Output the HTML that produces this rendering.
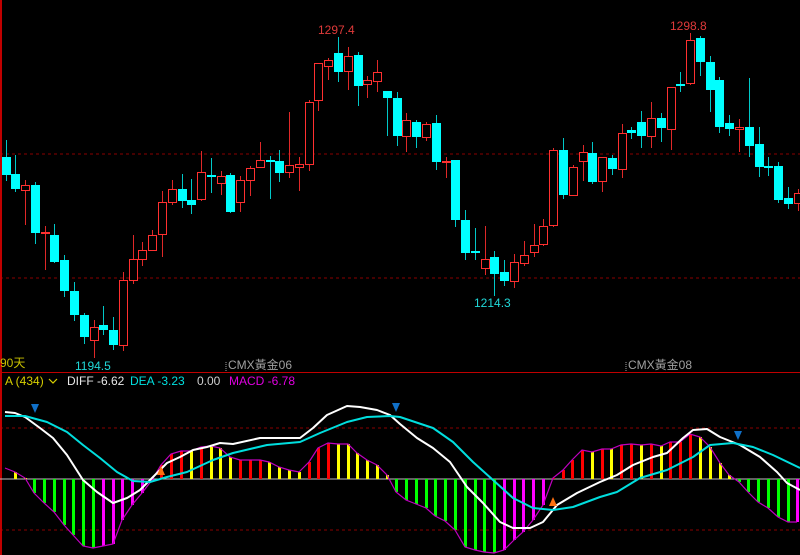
<!DOCTYPE html>
<html><head><meta charset="utf-8"><style>
html,body{margin:0;padding:0;background:#000;width:800px;height:555px;overflow:hidden}
svg{display:block}
text{font-family:"Liberation Sans","Noto Sans CJK TC",sans-serif;font-size:12px}
</style></head><body>
<svg id="s" width="800" height="555" xmlns="http://www.w3.org/2000/svg">
<rect width="800" height="555" fill="#000"/>
<line x1="0" y1="154" x2="800" y2="154" stroke="#8a0000" stroke-dasharray="3,3"/>
<line x1="0" y1="278" x2="800" y2="278" stroke="#8a0000" stroke-dasharray="3,3"/>
<line x1="0" y1="428" x2="800" y2="428" stroke="#8a0000" stroke-dasharray="3,3"/>
<line x1="0" y1="530" x2="800" y2="530" stroke="#8a0000" stroke-dasharray="3,3"/>
<line x1="0" y1="372.5" x2="800" y2="372.5" stroke="#c00000" stroke-width="1"/>
<line x1="1" y1="0" x2="1" y2="555" stroke="#c00000" stroke-width="2"/>
<g id="c"></g>
<line x1="0" y1="479" x2="800" y2="479" stroke="#c0c0c0" stroke-width="1"/>
<g id="m"></g>
<text x="318" y="34" fill="#e03a3a">1297.4</text>
<text x="670" y="30" fill="#e03a3a">1298.8</text>
<text x="474" y="307" fill="#20d8d8">1214.3</text>
<text x="75" y="370" fill="#20d8d8">1194.5</text>
<text x="0" y="367" fill="#c8c000">90天</text>
<text x="228" y="369" fill="#a0a0a0" font-size="11">CMX黃金06</text>
<line x1="226" y1="362" x2="226" y2="372" stroke="#a0a0a0" stroke-dasharray="1,1"/>
<text x="628" y="369" fill="#a0a0a0" font-size="11">CMX黃金08</text>
<line x1="626" y1="362" x2="626" y2="372" stroke="#a0a0a0" stroke-dasharray="1,1"/>
<text x="5" y="385" fill="#d8d000">A (434)</text>
<path d="M49 379 L53 383 L57 379" stroke="#d8d000" fill="none" stroke-width="1.2"/>
<text x="67" y="385" fill="#e8e8e8">DIFF -6.62</text>
<text x="130" y="385" fill="#00e0e0">DEA -3.23</text>
<text x="197" y="385" fill="#d0d0d0">0.00</text>
<text x="229" y="385" fill="#e000e0">MACD -6.78</text>
</svg>
<script>
var C=[['c',157,175,140,181],['c',174,189,155,192],['r',185,190,180,225],['c',185,233,182,244],['r',232,233,226,270],['c',235,262,224,263],['c',260,291,255,297],['c',291,315,282,321],['c',315,337,313,344],['r',327,340,320,358],['c',325,330,306,335],['c',330,345,317,350],['r',280,345,272,351],['r',259,280,235,284],['r',250,259,242,266],['r',235,250,230,250],['r',202,234,191,257],['r',189,202,180,205],['c',189,201,174,208],['c',200,205,179,214],['r',172,199,151,201],['c',175,176,158,193],['r',176,183,171,195],['c',175,212,173,213],['r',180,202,176,212],['r',168,180,166,196],['r',160,167,142,168],['c',160,162,156,199],['c',161,173,150,182],['r',165,172,112,178],['r',164,167,157,191],['r',102,164,100,171],['r',63,100,63,111],['r',60,66,58,80],['c',53,72,37,82],['r',56,71,47,90],['c',55,86,52,106],['r',80,84,76,98],['r',72,81,60,92],['c',91,98,91,136],['c',98,136,92,146],['r',120,136,113,152],['c',122,137,120,148],['r',124,137,122,141],['c',123,162,115,170],['r',161,162,157,178],['c',160,220,160,227],['c',220,253,210,260],['c',251,252,228,260],['r',259,268,226,275],['c',257,274,251,296],['c',272,281,260,286],['r',262,281,254,288],['r',255,263,241,266],['r',245,252,224,257],['r',226,244,219,246],['r',150,225,148,227],['c',150,195,138,199],['r',167,195,165,193],['r',152,161,145,181],['c',153,182,142,184],['r',157,181,157,192],['c',158,169,155,175],['r',133,169,124,178],['c',130,133,127,139],['c',122,136,111,148],['r',118,136,102,148],['c',118,128,113,142],['r',87,129,87,150],['c',84,85,72,92],['r',40,83,33,85],['c',38,62,36,76],['c',62,90,56,112],['c',80,127,77,133],['c',123,129,115,136],['r',127,129,119,152],['c',127,146,78,157],['c',144,167,127,177],['c',166,167,157,176],['c',166,200,162,203],['c',198,204,187,209],['r',193,203,189,211]];
var h='';
function X(i){return 5.5+i*9.78;}
C.forEach(function(d,i){var x=Math.round(X(i));var col=d[0]=='c'?'#00ffff':'#ff3030';var wc=d[0]=='c'?'#00c8c8':'#e02828';
var hi=Math.min(d[3],d[1]),lo=Math.max(d[4],d[2]);
h+='<line x1="'+(x+0.5)+'" y1="'+hi+'" x2="'+(x+0.5)+'" y2="'+lo+'" stroke="'+wc+'"/>';
var bh=Math.max(d[2]-d[1],1);
if(d[0]=='c')h+='<rect x="'+(x-4)+'" y="'+d[1]+'" width="9" height="'+Math.max(bh,2)+'" fill="#00ffff"/>';
else h+='<rect x="'+(x-3.5)+'" y="'+(d[1]+0.5)+'" width="8" height="'+bh+'" fill="#000" stroke="#ff3030"/>';});
document.getElementById('c').innerHTML=h;
var O=[[15,472],[25,478],[34,493],[44,503],[54,512],[64,525],[73,535],[83,546],[93,548],[103,546],[113,544],[122,520],[132,505],[142,493],[152,480],[161,465],[171,454],[181,451],[191,451],[201,447],[211,446],[220,448],[230,457],[240,460],[250,460],[260,460],[269,462],[279,467],[289,470],[299,472],[309,462],[318,448],[328,443],[338,444],[348,444],[357,453],[367,460],[377,465],[387,475],[396,492],[406,500],[416,504],[426,508],[435,516],[445,521],[455,530],[465,547],[475,550],[484,552],[494,553],[504,550],[514,540],[523,532],[533,520],[543,505],[553,478],[563,470],[572,460],[582,450],[592,452],[602,449],[611,449],[621,445],[631,444],[641,445],[651,444],[661,446],[670,442],[680,442],[690,434],[700,437],[710,447],[720,463],[729,475],[739,482],[748,492],[758,502],[768,508],[778,517],[788,522],[797,522]];
var col='yrrryryyyrrryyyyrrryyyyy';
var up=['r','r','r','y','r','y','y','y','r','r','r','y','y','y','y','r','r','r','y','y','y','y','y'];
var m='';var ui=0;
O.forEach(function(p,i){var y=p[1];var c;
if(y<479){ if(p[0]<160) c='#ffff00'; else if(p[0]<400){c=up[ui++]=='r'?'#ff0000':'#ffff00';} else {var mm=['#ff0000','#ff0000','#ff0000','#ff0000','#ffff00','#ff0000','#ffff00','#ff0000','#ff0000','#ffff00','#ff0000','#ffff00','#ff0000','#ff0000','#ff0000','#ffff00','#ffff00','#ffff00','#ffff00','#ffff00'];c=mm[Math.round((p[0]-553)/9.78)]||'#ffff00';}}
else { if(p[0]<=93) c='#00ff00'; else if(p[0]<=160) c='#ff00ff'; else if(p[0]<=495) c='#00ff00'; else if(p[0]<=545) c='#ff00ff'; else if(p[0]<=790) c='#00ff00'; else c='#ff00ff';}
var t=Math.min(y,479),b=Math.max(y,479);
m+='<rect x="'+(p[0]-1)+'" y="'+t+'" width="3" height="'+(b-t)+'" fill="'+c+'"/>';});
m+='<polyline fill="none" stroke="#c000c0" stroke-width="1.2" points="5,468 '+O.map(function(p){return p.join(',')}).join(' ')+'"/>';
var W=[[5,412],[15,413],[25,417],[40,428],[53,438],[67,455],[83,480],[97,492],[113,503],[127,498],[140,490],[153,477],[167,463],[180,457],[193,450],[207,447],[220,443],[233,444],[260,438],[300,438],[313,428],[327,415],[347,406],[360,407],[377,410],[390,415],[400,424],[417,438],[433,448],[450,462],[467,487],[483,503],[500,522],[513,528],[530,528],[543,522],[557,505],[577,493],[600,482],[617,475],[633,465],[653,457],[667,453],[683,438],[693,430],[707,429],[720,437],[740,445],[760,457],[777,472],[787,483],[800,490]];
var D=[[5,416],[25,416],[47,422],[67,432],[83,445],[100,458],[117,472],[133,481],[150,482],[167,477],[187,472],[213,460],[233,453],[267,445],[300,442],[320,433],[347,422],[367,417],[390,416],[400,417],[433,428],[453,442],[473,462],[493,480],[513,498],[533,508],[553,510],[573,507],[600,497],[617,492],[640,478],[667,470],[693,457],[710,445],[733,443],[753,447],[773,455],[800,468]];
function pl(a,c){return '<polyline fill="none" stroke="'+c+'" stroke-width="2" stroke-linejoin="round" points="'+a.map(function(p){return p.join(',')}).join(' ')+'"/>';}
m+=pl(W,'#ffffff')+pl(D,'#00dede');
function dn(x,y){return '<path d="M'+(x-4)+' '+(y-5)+' L'+(x+4)+' '+(y-5)+' L'+x+' '+(y+4)+' Z" fill="#1070c8"/>';}
function upt(x,y){return '<path d="M'+(x-4)+' '+(y+4)+' L'+(x+4)+' '+(y+4)+' L'+x+' '+(y-5)+' Z" fill="#ff7010"/>';}
m+=dn(35,409)+dn(396,408)+dn(738,436)+upt(161,471)+upt(553,502);
document.getElementById('m').innerHTML=m;
</script>
</body></html>
